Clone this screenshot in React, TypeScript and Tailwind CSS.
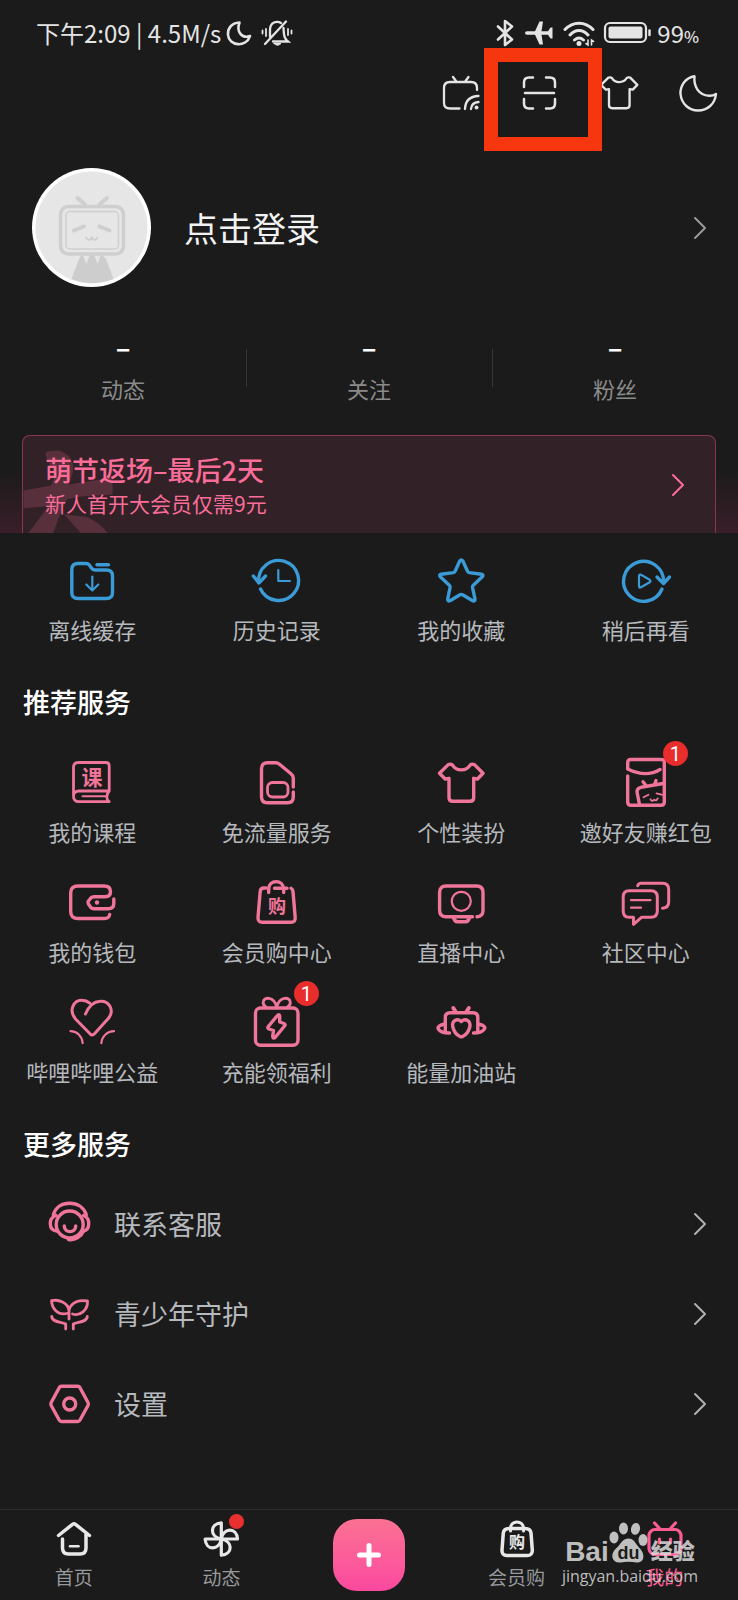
import type { ReactNode } from 'react';

const Icon = ({ children, size = 'size-12', box = '0 0 48 48', width = 3.4 }: { children: ReactNode; size?: string; box?: string; width?: number }) => (
  <svg
    className={`${size} shrink-0 overflow-visible`}
    viewBox={box}
    fill="none"
    stroke="currentColor"
    strokeWidth={width}
    strokeLinecap="round"
    strokeLinejoin="round"
    aria-hidden="true"
  >
    {children}
  </svg>
);

const Glyph = ({ x, y, size, children }: { x: number; y: number; size: number; children: string }) => (
  <text x={x} y={y} fontSize={size} fontWeight={700} textAnchor="middle" fill="currentColor" stroke="none">
    {children}
  </text>
);

const Chevron = ({ className }: { className: string }) => (
  <svg className={`h-6 w-4 shrink-0 ${className}`} viewBox="0 0 16 24" fill="none" stroke="currentColor" strokeWidth={2} strokeLinecap="round" strokeLinejoin="round" aria-hidden="true">
    <path d="M3 2l10 10L3 22" />
  </svg>
);

const Shirt = () => (
  <path d="M15.500 6C19 12.500 29.500 12.500 33.200 6Q34.500 4.800 37.500 5.600L46 14.300L40.500 20L36.700 19.300V38.500Q36.700 42.300 33 42.300H15.800Q12 42.300 12 38.500V19.300L8.200 20L2.500 14.300L11.200 5.600Q14 4.800 15.500 6Z" />
);

const quickLinks = [
  {
    label: '离线缓存',
    icon: (
      <Icon>
        <path d="M18 6.500H10Q3.800 6.500 3.800 12.500V35.500Q3.800 41.500 10 41.500H38.500Q44.500 41.500 44.500 35.500V19Q44.500 13 38.500 13H27Q24.800 13 23.500 11L21.300 8Q20.200 6.500 18 6.500Z" />
        <path d="M29 7.800H40.500" />
        <path strokeWidth={2.200} d="M24.300 19.500V33.500M18.300 27.500l6 6 6-6" />
      </Icon>
    ),
  },
  {
    label: '历史记录',
    icon: (
      <Icon>
        <path d="M5.700 25.500A20 20 0 1 1 7.500 32" />
        <path d="M.300 19l5.600 7 6.600-7" />
        <path strokeWidth={2.200} d="M25.300 13V24H37" />
      </Icon>
    ),
  },
  {
    label: '我的收藏',
    icon: (
      <Icon>
        <path d="M26 4.200L30.500 14.200Q31 15.400 32.300 15.600L44.500 17.200Q47 17.800 45.300 19.800L36.300 28.200Q35.300 29.200 35.500 30.400L38 42Q38.100 44.600 35.700 43.700L25.600 37.800Q24.300 37.200 23 37.800L13 43.700Q10.500 44.600 10.700 42L13.100 30.400Q13.300 29.200 12.300 28.200L3.300 19.800Q1.700 17.800 4.100 17.200L16.300 15.600Q17.600 15.400 18.100 14.200L22.600 4.200Q24.300 1.600 26 4.200Z" />
      </Icon>
    ),
  },
  {
    label: '稍后再看',
    icon: (
      <Icon>
        <path d="M41.500 25.500A20 20 0 1 0 40 32" />
        <path d="M35 20l6.500 6.500L47.500 20" />
        <path strokeWidth={2.200} d="M17 19V29Q17 31.300 19 30.200L27.700 25.300Q29.300 24 27.700 22.800L19 17.800Q17 16.800 17 19Z" />
      </Icon>
    ),
  },
];

const services: { label: string; icon: ReactNode; badge?: number }[] = [
  {
    label: '我的课程',
    icon: (
      <Icon width={2.8}>
        <path d="M5.500 37V8.500Q5.500 3.500 10.500 3.500H38Q41.200 3.500 41.200 6.700V32H11Q5.500 32 5.500 37.300Q5.500 42.700 11 42.700H41.200Q38.200 40.500 39 37.200Q39 34.500 41.200 32" />
        <path strokeWidth={2} d="M14.500 37.300H38" />
        <Glyph x={24} y={25.5} size={21}>课</Glyph>
      </Icon>
    ),
  },
  {
    label: '免流量服务',
    icon: (
      <Icon>
        <path d="M40.300 28V19Q40.300 16.500 38 14.800L26.500 5.200Q24.800 3.800 22.500 3.800H14.500Q8.500 3.800 8.500 9.800V38Q8.500 43.800 14.500 43.800H34.500Q40.300 43.800 40.300 38V33" />
        <rect x="14.500" y="23.500" width="20.500" height="14.500" rx="5" strokeWidth={2.8} />
      </Icon>
    ),
  },
  {
    label: '个性装扮',
    icon: (
      <Icon>
        <Shirt />
      </Icon>
    ),
  },
  {
    label: '邀好友赚红包',
    badge: 1,
    icon: (
      <Icon>
        <path d="M5.700 17V43Q5.700 46.300 9 46.300H39Q42.300 46.300 42.300 43V3.500Q42.300.500 39 .500H9Q5.700.500 5.700 3.500V10Q24 19 38 10.500" />
        <path d="M17.500 45.500L15.200 34Q14.300 29.500 19 28.300L41 24.500M21 22.800l3.500 4.500M34 21.500l-1.500 4.500" />
        <path strokeWidth={1.800} d="M21.500 38.300l5-2.500M34.500 34.300l6 1.500M28.500 40.300q1.500 3 3.700.300q2.300 2 3.500-1.200" />
      </Icon>
    ),
  },
  {
    label: '我的钱包',
    icon: (
      <Icon>
        <path d="M41.700 35.500Q41 39.500 36.500 39.500H10Q2.700 39.500 2.700 32.500V14Q2.700 7 10 7H36Q42.500 7 42.500 12.500Q42.500 17.800 37 17.800H26.500Q23.500 17.800 22 20L20.300 22.300Q19.500 23.500 20.300 24.800L22 27.300Q23.500 29.700 26.500 29.700H40Q45.800 29.700 45.800 24.500V20" />
        <circle cx="29" cy="23.500" r="2.200" fill="currentColor" stroke="none" />
      </Icon>
    ),
  },
  {
    label: '会员购中心',
    icon: (
      <Icon>
        <path d="M13 9H11Q7.500 9 7.200 12.500L5 38.500Q4.800 43.300 9.500 43.300H38Q42.500 43.300 42.200 38.500L40 12.500Q39.700 10 38 9.300M21.500 9.300H34" />
        <path d="M15.700 13.500V10.500C15.700 0 30.500 0 30.700 10.500V13.500" />
        <Glyph x={24} y={34} size={18}>购</Glyph>
      </Icon>
    ),
  },
  {
    label: '直播中心',
    icon: (
      <Icon>
        <path d="M40 37.800Q46 37.300 46 31.500V13.500Q46 7 39.500 7H9Q2.600 7 2.600 13.500V31.300Q2.600 37.800 9 37.800H35.500" />
        <path d="M16.500 38.500Q17.500 42.700 20.500 42.700H28.500Q31.500 42.700 32.500 38.500" />
        <circle cx="24.300" cy="22.300" r="9.500" strokeWidth={2.200} />
      </Icon>
    ),
  },
  {
    label: '社区中心',
    icon: (
      <Icon width={3}>
        <path d="M7 11.700H29Q35.300 11.700 35.300 18V32Q35.300 38.300 29 38.300H19.500L11.500 45.300V38.300H7Q1.200 38.300 1.200 32V18Q1.200 11.700 7 11.700Z" />
        <path d="M15.700 6.800Q16.500 4.300 19 4.300H40.500Q46.700 4.300 46.700 10.500V23Q46.700 28.800 40.500 29.200" />
        <path strokeWidth={2.200} d="M9 21.200H28.500M9 28.700H19" />
      </Icon>
    ),
  },
  {
    label: '哔哩哔哩公益',
    icon: (
      <Icon width={3}>
        <path d="M17.500 15C20 9 25 2.500 32 2.200C41 1.500 46.500 11 41 18.500Q39.500 20.500 37.500 22.500L26.500 34.800Q24.300 37 22 34.800L8 20.500C-.500 11 6.500.800 14 1.300Q18.500 1.500 21.500 4" />
        <path strokeWidth={2.200} d="M2.500 32.200C9 32.300 14 37 14.700 44.200M46 32.200C39.500 32.300 34 37 33.300 44.200" />
      </Icon>
    ),
  },
  {
    label: '充能领福利',
    badge: 1,
    icon: (
      <Icon>
        <rect x="2.500" y="9" width="42.500" height="37.300" rx="5" />
        <path strokeWidth={2.800} d="M23.700 8C21-3 10.500-2.500 10.200 3.300Q10 6.500 13.500 8.500M23.700 8C26.500-3 37-2.500 37.300 3.300Q37.500 6.500 34 8.500" />
        <path d="M24 17Q26 14.500 26.700 17V23L31 24.500Q33 25.300 31.500 27L22.500 38Q20 40.500 19.700 37.300L20.500 31.500L16 30Q14.200 29.200 15.300 27.500Z" />
      </Icon>
    ),
  },
  {
    label: '能量加油站',
    icon: (
      <Icon>
        <path d="M16.300 9l2.200 3.500M31.800 9l-2.200 3.500" strokeWidth={4} />
        <path d="M8.300 33V18.500Q8.300 13.700 13 13.700H36Q40.800 13.700 40.800 18.500V33" />
        <path d="M7.500 25Q-1 27 1.700 30.500Q4 34 12.500 34M41.500 25Q50 27 47 30.500Q44.500 34 36.500 34" />
        <path d="M24.300 22.500C20 18.500 14.500 22 15.800 28Q17.500 35 23 37.500Q24.300 38.300 25.600 37.500Q31 35 32.800 28C34 22 28.500 18.500 24.300 22.500Z" />
      </Icon>
    ),
  },
];

const moreServices = [
  {
    label: '联系客服',
    icon: (
      <Icon box="0 2 48 48">
        <path d="M7.300 17C9.500 9 16 5.300 23.500 5.300S38 9 40.300 17" />
        <circle cx="23.700" cy="26.500" r="13.500" />
        <path d="M10 17.500Q4 19.500 4.300 26T10.500 33M37.500 17.500Q43 19.500 42.700 26T37.500 33" />
        <path d="M18.300 28C18.500 35.500 29.500 35.500 29.700 28M22.500 41.500C29 42.500 35 39 37.500 33" />
      </Icon>
    ),
  },
  {
    label: '青少年守护',
    icon: (
      <Icon box="0 2 48 48" width={2.8}>
        <path d="M23 31V22C21.500 14.500 13 11 5.500 12.700C6 21 12 27.500 21 25.500" />
        <path d="M23 21.500C26 14 33.500 11.500 41.500 13C42 22 34 28.500 26.500 26" />
        <path d="M5.700 28.500C6.500 35 16 33.500 19.700 36V41M41.300 28.500C40.500 35 31 33.500 27.300 36V41" />
      </Icon>
    ),
  },
  {
    label: '设置',
    icon: (
      <Icon box="0 2 48 48">
        <path d="M15.500 8.300H31.700Q33.200 8.300 34 9.700L42 24.500Q42.800 26 42 27.500L34 42Q33.200 43.500 31.700 43.500H15.500Q14 43.500 13.200 42L5.200 27.500Q4.400 26 5.200 24.500L13.200 9.700Q14 8.300 15.500 8.300Z" />
        <circle cx="23.700" cy="26" r="6" />
      </Icon>
    ),
  },
];

const StatusBar = () => (
  <div className="flex h-[66px] items-center justify-between pl-9 pr-[39px] text-2xl leading-8 text-[#e4e4e4]">
    <div className="flex items-center">
      <span>下午2:09 | 4.5M/s</span>
      <svg className="ml-1 size-7" viewBox="0 0 28 28" fill="none" stroke="currentColor" strokeWidth={2.6} strokeLinejoin="round" aria-hidden="true">
        <path d="M14.500 3.500C6 4 2.500 10 3 16C4 27 21 29 25 17C17 20 11 13 14.500 3.500Z" />
      </svg>
      <svg className="ml-2 h-7 w-8" viewBox="0 0 32 28" fill="none" stroke="currentColor" strokeWidth={2.3} strokeLinecap="round" aria-hidden="true">
        <path d="M4 25L25 2.500M9 18V11C9 3 16 1.500 20 4M22.500 9C23 15 22.500 19 27 22.500H12" />
        <path d="M13 24.500H20Q16.500 28 13 24.500Z" fill="currentColor" strokeWidth={1} />
        <path strokeWidth={1.8} d="M1.500 11.500V14.500M5 10V17M27 10V16M30.500 11.500V14.500" />
      </svg>
    </div>
    <div className="flex items-center">
      <svg className="h-7 w-5" viewBox="0 0 20 28" fill="none" stroke="currentColor" strokeWidth={2.6} strokeLinecap="round" strokeLinejoin="round" aria-hidden="true">
        <path d="M3 7.500L17 20.500L10 26V2L17 7.500L3 20.500" />
      </svg>
      <svg className="ml-2 h-7 w-8" viewBox="0 0 32 28" fill="currentColor" aria-hidden="true">
        <path d="M2 14Q2 12.200 4 12.200H12L16.500 2.500H20L18.500 12.200H25L27.500 8.500H29.500V19.500H27.500L25 15.800H18.500L20 25.500H16.500L12 15.800H4Q2 15.800 2 14Z" />
      </svg>
      <svg className="ml-2 h-7 w-8" viewBox="0 0 32 28" fill="none" stroke="currentColor" strokeWidth={3} strokeLinecap="round" aria-hidden="true">
        <path d="M2 10.500C10 2 22 2 30 10.500M7 16C12.500 10 19.500 10 25 16M11.500 21Q16 17 20.500 21" />
        <circle cx="16" cy="24.500" r="2.500" fill="currentColor" stroke="none" />
        <path strokeWidth={1.6} d="M25 21V26L23 24.500M28.500 26V21L30.500 22.500" />
      </svg>
      <svg className="ml-2 h-7 w-12" viewBox="0 0 48 28" fill="none" aria-hidden="true">
        <rect x="2" y="4" width="41" height="19" rx="5" stroke="currentColor" strokeWidth={2.2} />
        <rect x="5.500" y="7.500" width="34" height="12" rx="2" fill="currentColor" />
        <path d="M46.500 11.500V16" stroke="currentColor" strokeWidth={2.5} strokeLinecap="round" />
      </svg>
      <span className="ml-1.5">99<span className="text-base font-medium">%</span></span>
    </div>
  </div>
);

const Toolbar = () => (
  <header className="flex h-[54px] items-center justify-end gap-[39px] pr-5 text-[#e4e4e4]">
    <button type="button" aria-label="投屏">
      <Icon size="size-10" box="0 0 40 40" width={2.3}>
        <path d="M18.500 35.500H9Q3 35.500 3 30V15Q3 9 9 9H30Q36 9 36 15V17M12 4l3 4M27.500 4l-3 4" />
        <path d="M24 36Q24.500 23.500 37.500 23M30 36Q30.500 29.500 37.500 29" />
        <circle cx="35.500" cy="34.500" r="2" fill="currentColor" stroke="none" />
      </Icon>
    </button>
    <button type="button" aria-label="扫一扫" className="relative">
      <Icon size="size-10" box="-1 0 40 40" width={2.5}>
        <path d="M3 14V9.500Q3 4.500 8 4.500H12M25 4.500H29Q34 4.500 34 9.500V14M34 26V30.500Q34 35.500 29 35.500H25M12 35.500H8Q3 35.500 3 30.500V26M4 20H33" />
      </Icon>
      <span className="absolute -left-9 -top-[25px] h-[103px] w-[118px] border-14 border-[#f5360f]" />
    </button>
    <button type="button" aria-label="装扮">
      <Icon size="size-10" box="1 0 46 48" width={2.8}>
        <Shirt />
      </Icon>
    </button>
    <button type="button" aria-label="夜间模式">
      <Icon size="size-10" box="0 0 40 40" width={2.4}>
        <path d="M16.500 3.200C8 4.500 2 12 2.500 21C3.500 31 11 37.500 20 37.500C29.500 37.500 37 31 38 21Q35 23 31 22.800C20.500 22 15.500 13.500 16.500 3.200Z" />
      </Icon>
    </button>
  </header>
);

const Profile = () => (
  <button type="button" className="flex w-full items-center pl-8 pr-[30px] pt-12 text-left">
    <svg className="size-[119px] shrink-0" viewBox="0 0 119 119" fill="none" aria-hidden="true">
      <circle cx="59.500" cy="59.500" r="59.500" fill="#fff" />
      <circle cx="59.500" cy="59.500" r="56" fill="#e6e6e6" />
      <path d="M39.500 111L47 91L50 86L54.500 96L58 86H62L65.500 96L69 86L74 91L81.500 111Q60 119 39.500 111Z" fill="#cdcdcd" />
      <g stroke="#cfcfcf" strokeLinecap="round">
        <rect x="28.500" y="38.500" width="63" height="47.500" rx="8" strokeWidth={3.5} fill="#e6e6e6" />
        <rect x="34" y="43.500" width="52.500" height="37.500" rx="4" strokeWidth={1.5} />
        <path strokeWidth={4} d="M45.500 30l7.500 6.500M75 30l-7.500 6.500M42 62.500l10-4M67.500 58.500l10 4" />
        <path strokeWidth={1.8} d="M54 69.500q3 5 5.700 0q2.800 5 5.700 0" />
      </g>
    </svg>
    <span className="ml-[33px] text-[34px] leading-[48px] text-[#f2f2f2]">点击登录</span>
    <Chevron className="ml-auto text-[#9a9a9a]" />
  </button>
);

const Stats = () => (
  <div className="mt-[37px] grid grid-cols-3">
    {['动态', '关注', '粉丝'].map((label, index) => (
      <a key={label} href="#" className="relative flex flex-col items-center pb-1">
        <span className="text-[27px] font-bold leading-[46px] text-white">–</span>
        <span className="mt-0.5 text-[22px] leading-8 text-[#8b8b8b]">{label}</span>
        {index > 0 && <span className="absolute left-0 top-[25px] h-[38px] w-px bg-[#363636]" />}
      </a>
    ))}
  </div>
);

const VipBanner = () => (
  <section className="bg-[linear-gradient(180deg,#1b1b1b_50%,#3a1e29_100%)] px-[22px] pt-[27px]">
    <a href="#" className="relative flex h-[98px] items-center justify-between overflow-hidden rounded-t-lg border border-b-0 border-[#8a3452] bg-[#322227] pl-[22px] pr-[29px] text-[#fb6d99]">
      <svg className="absolute left-0 top-0 h-full w-24" viewBox="0 0 96 98" fill="#57303c" aria-hidden="true">
        <path d="M22 18Q24 14 35 15C47 17 53 28 49 40L46 49L90 42V59L58 61L44 64Q38 75 30 98H5Q20 78 25 71L0 73V55L28 50Q33 40 29 33Q24 26 22 18Z" />
        <path d="M41 79L65 82Q80 90 85 98H58Q49 88 41 79Z" />
      </svg>
      <span className="relative flex flex-col">
        <span className="text-[27px] font-medium leading-9">萌节返场–最后2天</span>
        <span className="text-[21px] leading-[30px]">新人首开大会员仅需9元</span>
      </span>
      <Chevron className="relative" />
    </a>
  </section>
);

const TabBar = () => (
  <nav className="relative mt-auto grid h-[91px] grid-cols-5 border-t border-[#2e2e2e] text-[19px] leading-7 text-[#97999d]">
    <a href="#" className="flex flex-col items-center pt-[9px]">
      <Icon size="size-10 text-[#e8e8e8]" box="0 0 40 40" width={3.5}>
        <path d="M4.500 16.500L18.500 5.300Q20 4.200 21.500 5.300L35.500 16.500M8.500 20V29Q8.500 35 14.500 35H26Q32 35 32 29V15" />
        <path strokeWidth={2.5} d="M16 27.300H24.500" />
      </Icon>
      <span className="mt-1">首页</span>
    </a>
    <a href="#" className="relative flex flex-col items-center pt-[9px]">
      <Icon size="size-10 text-[#e8e8e8]" box="0 0 40 40" width={3.2}>
        {[0, 90, 180, 270].map((angle) => (
          <path key={angle} transform={`rotate(${angle} 20.300 20)`} d="M20.300 20V3.800C8.500 4.500 8.500 18 20.300 20Z" />
        ))}
      </Icon>
      <span className="absolute left-1/2 top-1 ml-2 size-[15px] rounded-full bg-[#e83030]" />
      <span className="mt-1">动态</span>
    </a>
    <button type="button" aria-label="发布" className="mt-[9px] flex size-[72px] items-center justify-center justify-self-center rounded-3xl bg-linear-to-b from-[#fb7193] to-[#fb489f] text-white">
      <Icon size="size-7" box="0 0 28 28" width={5}>
        <path d="M14 4.500V23.500M4.500 14H23.500" />
      </Icon>
    </button>
    <a href="#" className="flex flex-col items-center pt-[9px]">
      <Icon size="size-10 text-[#e8e8e8]" box="0 0 40 40" width={3.5}>
        <path d="M12 9.500H28Q33.500 9.500 34 14L35.300 31Q35.500 36.500 30 36.500H10Q4.700 36.500 5 31L6.300 14Q6.800 9.500 12 9.500Z" />
        <path strokeWidth={3} d="M13.500 12V9C14 1 26 1 26.500 9V12" />
        <Glyph x={20} y={29} size={16}>购</Glyph>
      </Icon>
      <span className="mt-1">会员购</span>
    </a>
    <a href="#" className="flex flex-col items-center pt-[9px] text-[#fb5c92]">
      <Icon size="size-10" box="0 0 40 40" width={3.2}>
        <rect x="5" y="10.500" width="32" height="25" rx="6" />
        <path d="M10.500 4l5 5.500M31.500 4l-5 5.500M15.500 20v4M26.500 20v4" />
      </Icon>
      <span className="mt-1">我的</span>
    </a>

    <div className="pointer-events-none absolute right-10 top-3 flex flex-col items-center font-['Liberation_Sans','Noto_Sans_CJK_SC',sans-serif] text-[#dcdcdc]/85">
      <div className="flex items-end">
        <span className="text-[28px] font-bold leading-6">Bai</span>
        <svg className="h-[42px] w-[38px] shrink-0 overflow-visible" viewBox="0 0 38 42" fill="currentColor" aria-hidden="true">
          <ellipse cx="5" cy="15.500" rx="4.500" ry="6" />
          <ellipse cx="14.500" cy="6.500" rx="4.500" ry="6" />
          <ellipse cx="26.500" cy="7" rx="4.500" ry="6" transform="rotate(12 27 7)" />
          <ellipse cx="34" cy="18" rx="4.500" ry="6" />
          <path d="M19.500 16.500C25 16.500 26 21 30 25.500C36 31 36.500 41 27.500 40.500Q19 39 12 40.500C2 41.500 1 31.500 7 26.500C12.500 22 13 16.500 19.500 16.500Z" />
          <text x="19.500" y="37" fontSize="18" fontWeight={700} textAnchor="middle" fill="#1b1b1b">du</text>
        </svg>
        <span className="ml-1 text-[22px] font-black leading-6">经验</span>
      </div>
      <span className="font-['Open_Sans',sans-serif] text-base leading-6">jingyan.baidu.com</span>
    </div>
  </nav>
);

const App = () => {
  return (
    <div className="flex min-h-screen flex-col bg-[#1b1b1b] font-['Noto_Sans_CJK_SC',sans-serif] text-[#b6b9bd]">
      <StatusBar />
      <Toolbar />
      <Profile />
      <Stats />
      <VipBanner />

      <main>
        <div className="grid grid-cols-4 pt-6">
          {quickLinks.map((item) => (
            <a key={item.label} href="#" className="flex flex-col items-center gap-2">
              <span className="text-[#3a9bd6]">{item.icon}</span>
              <span className="whitespace-nowrap text-[22px] leading-8">{item.label}</span>
            </a>
          ))}
        </div>

        <h2 className="mt-[37px] px-[23px] text-[27px] font-medium leading-10 text-white">推荐服务</h2>
        <div className="mt-[37px] grid grid-cols-4 gap-y-8">
          {services.map((item) => (
            <a key={item.label} href="#" className="flex flex-col items-center gap-2">
              <span className="relative text-[#ef7599]">
                {item.icon}
                {item.badge && (
                  <span className="absolute -top-[18px] left-[41px] flex size-[25px] items-center justify-center rounded-full bg-[#e92c2c] font-['Roboto',sans-serif] text-xl leading-6 text-white">
                    {item.badge}
                  </span>
                )}
              </span>
              <span className="whitespace-nowrap text-[22px] leading-8">{item.label}</span>
            </a>
          ))}
        </div>

        <h2 className="mt-[37px] px-[23px] text-[27px] font-medium leading-10 text-white">更多服务</h2>
        <ul className="mt-[15px]">
          {moreServices.map((item) => (
            <li key={item.label}>
              <a href="#" className="flex h-[90px] items-center pl-[46px] pr-[30px] text-[27px] leading-10">
                <span className="text-[#ef7599]">{item.icon}</span>
                <span className="ml-5">{item.label}</span>
                <Chevron className="ml-auto text-[#b0b0b0]" />
              </a>
            </li>
          ))}
        </ul>
      </main>

      <TabBar />
    </div>
  );
};

export default App;
